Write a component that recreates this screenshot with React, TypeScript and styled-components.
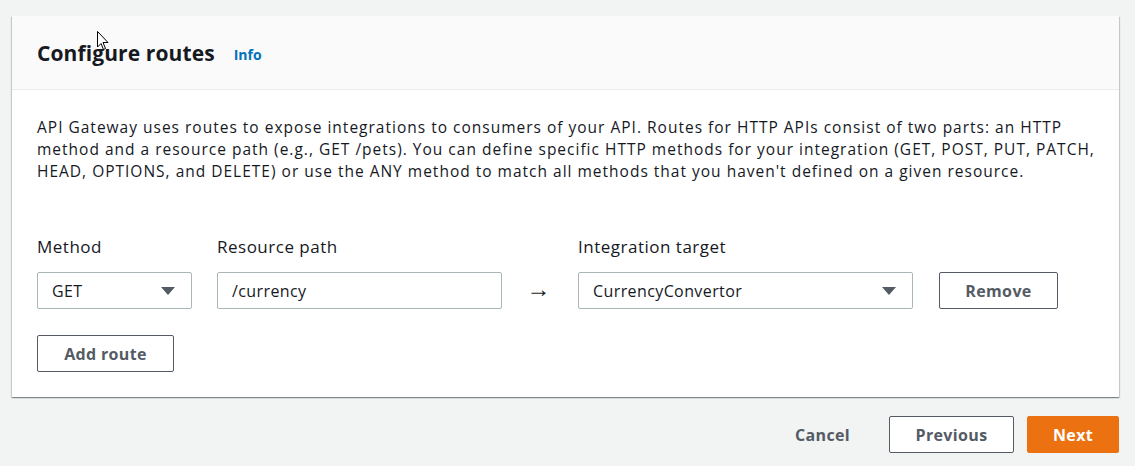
import React from "react";
import styled, { createGlobalStyle } from "styled-components";

const GlobalStyle = createGlobalStyle`
  html, body {
    margin: 0;
    padding: 0;
    background: #f2f3f3;
  }
  body {
    font-family: "Open Sans", "Noto Sans", Arial, sans-serif;
    color: #16191f;
  }
`;

const Page = styled.div`
  position: relative;
  width: 1135px;
  height: 466px;
  padding: 16px 16px 0 12px;
  box-sizing: border-box;
`;

const Card = styled.section`
  background: #fff;
  box-shadow: 0 1px 1px 0 rgba(0, 28, 36, 0.3), 1px 1px 1px 0 rgba(0, 28, 36, 0.15),
    -1px 1px 1px 0 rgba(0, 28, 36, 0.15);
`;

const CardHeader = styled.header`
  height: 74px;
  box-sizing: border-box;
  background: #fafafa;
  border-bottom: 1px solid #eaeded;
  display: flex;
  align-items: center;
  padding: 0 25px;
  gap: 19px;
`;

const Title = styled.h2`
  margin: 0;
  font-size: 21px;
  font-weight: 700;
  letter-spacing: 0.1px;
  color: #16191f;
`;

const InfoLink = styled.a`
  font-size: 14px;
  font-weight: 700;
  color: #0073bb;
  text-decoration: none;
  margin-top: 4px;
`;

const CardBody = styled.div`
  padding: 26px 25px 25px;
`;

const Description = styled.p`
  margin: 0 0 54px;
  font-size: 15.5px;
  letter-spacing: 1px;
  line-height: 22px;
  white-space: nowrap;
`;

const RouteGrid = styled.div`
  display: grid;
  grid-template-columns: 180px 285px 76px 361px 119px;
  align-items: center;
  row-gap: 14px;
`;

const Label = styled.label`
  font-size: 17px;
  letter-spacing: 0.5px;
  line-height: 22px;
`;

const Field = styled.div<{ $width?: number }>`
  width: ${(p) => (p.$width ? `${p.$width}px` : "auto")};
  height: 37px;
  box-sizing: border-box;
  border: 1px solid #aab7b8;
  border-radius: 2px;
  background: #fff;
  display: flex;
  align-items: center;
  padding: 0 14px;
  font-size: 16px;
  letter-spacing: 0.4px;
  color: #16191f;
`;

const SelectField = styled(Field)`
  justify-content: space-between;
  padding-right: 16px;
`;

const Caret = styled.span`
  width: 0;
  height: 0;
  border-left: 7px solid transparent;
  border-right: 7px solid transparent;
  border-top: 8px solid #545b64;
`;

const Arrow = styled.span`
  text-align: center;
  font-family: "Liberation Sans", Arial, sans-serif;
  font-size: 24px;
  line-height: 24px;
  margin-top: -3px;
  padding-right: 3px;
  color: #16191f;
`;

const Button = styled.button<{ $primary?: boolean; $plain?: boolean; $width?: number }>`
  width: ${(p) => (p.$width ? `${p.$width}px` : "auto")};
  height: 37px;
  box-sizing: border-box;
  padding: 0 20px;
  border-radius: 2px;
  font-family: inherit;
  font-size: 16px;
  font-weight: 700;
  letter-spacing: 0.35px;
  cursor: pointer;
  background: ${(p) => (p.$primary ? "#ec7211" : p.$plain ? "transparent" : "#fff")};
  color: ${(p) => (p.$primary ? "#fff" : "#545b64")};
  border: 1px solid
    ${(p) => (p.$primary ? "#ec7211" : p.$plain ? "transparent" : "#545b64")};
`;

const AddRow = styled.div`
  margin-top: 26px;
  display: flex;
`;

const Footer = styled.div`
  margin-top: 19px;
  display: flex;
  justify-content: flex-end;
  align-items: center;
  gap: 13px;
`;

const CancelButton = styled(Button)`
  margin-right: 5px;
`;

const Cursor = styled.svg`
  position: absolute;
  left: 97px;
  top: 31px;
`;

export default function App() {
  return (
    <Page>
      <GlobalStyle />
      <Card>
        <CardHeader>
          <Title>Configure routes</Title>
          <InfoLink href="#">Info</InfoLink>
        </CardHeader>
        <CardBody>
          <Description>
            API Gateway uses routes to expose integrations to consumers of your API. Routes for HTTP APIs consist of two parts: an HTTP
            <br />
            method and a resource path (e.g., GET /pets). You can define specific HTTP methods for your integration (GET, POST, PUT, PATCH,
            <br />
            HEAD, OPTIONS, and DELETE) or use the ANY method to match all methods that you haven't defined on a given resource.
          </Description>
          <RouteGrid>
            <Label>Method</Label>
            <Label>Resource path</Label>
            <span />
            <Label>Integration target</Label>
            <span />
            <SelectField $width={155}>
              GET
              <Caret />
            </SelectField>
            <Field>/currency</Field>
            <Arrow>→</Arrow>
            <SelectField $width={335}>
              CurrencyConvertor
              <Caret />
            </SelectField>
            <Button>Remove</Button>
          </RouteGrid>
          <AddRow>
            <Button $width={137}>Add route</Button>
          </AddRow>
        </CardBody>
      </Card>
      <Footer>
        <CancelButton $plain>Cancel</CancelButton>
        <Button $width={125}>Previous</Button>
        <Button $primary $width={92}>Next</Button>
      </Footer>
      <Cursor width="12" height="20" viewBox="0 0 12 20">
        <path d="M0.5 0.5 L0.5 16 L4 12.5 L6.5 18.5 L8.5 17.5 L6 11.5 L11 11.5 Z" fill="#fff" stroke="#000" strokeWidth="1" />
      </Cursor>
    </Page>
  );
}
